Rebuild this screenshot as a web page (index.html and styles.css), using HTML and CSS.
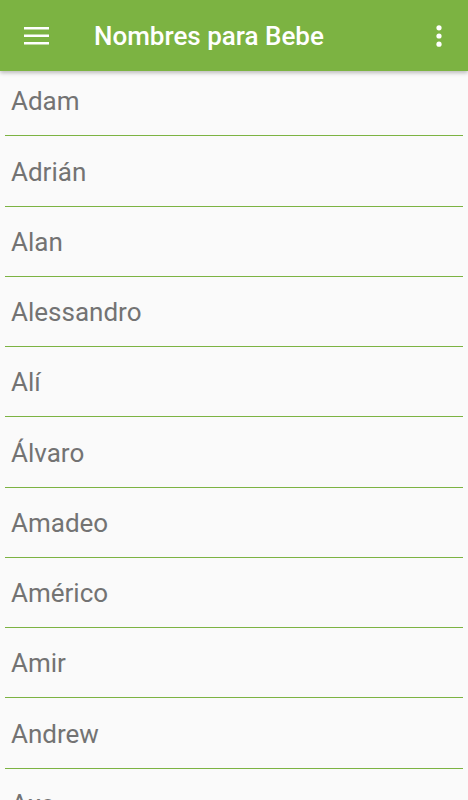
FILE: index.html
```html
<!DOCTYPE html>
<html lang="es">
<head>
<meta charset="utf-8">
<title>Nombres para Bebe</title>
<link rel="stylesheet" href="styles.css">
</head>
<body>
<header class="appbar">
  <button class="icon-btn menu" aria-label="Menú">
    <svg width="25" height="18" viewBox="0 0 25 18"><rect x="0" y="0" width="25" height="2.5" fill="#fff"/><rect x="0" y="7.5" width="25" height="2.5" fill="#fff"/><rect x="0" y="15" width="25" height="2.5" fill="#fff"/></svg>
  </button>
  <h1 class="title">Nombres para Bebe</h1>
  <button class="icon-btn more" aria-label="Más opciones">
    <svg width="6" height="22" viewBox="0 0 6 22"><circle cx="3" cy="2.8" r="2.6" fill="#fff"/><circle cx="3" cy="11" r="2.6" fill="#fff"/><circle cx="3" cy="19.2" r="2.6" fill="#fff"/></svg>
  </button>
</header>
<ul class="names">
  <li class="name">Adam</li>
  <li class="name">Adrián</li>
  <li class="name">Alan</li>
  <li class="name">Alessandro</li>
  <li class="name">Alí</li>
  <li class="name">Álvaro</li>
  <li class="name">Amadeo</li>
  <li class="name">Américo</li>
  <li class="name">Amir</li>
  <li class="name">Andrew</li>
  <li class="name">Axe</li>
</ul>
</body>
</html>
```
FILE: styles.css
```css
html, body {
  margin: 0;
  padding: 0;
  background: #fafafa;
  overflow: hidden;
  height: 800px;
}
body {
  font-family: Roboto, "Noto Sans", "Liberation Sans", sans-serif;
}
.appbar {
  position: relative;
  z-index: 2;
  height: 71px;
  background: #7cb342;
  display: flex;
  align-items: center;
  box-shadow: 0 2px 4px rgba(0,0,0,0.25);
}
.icon-btn {
  border: 0;
  background: none;
  padding: 0;
  display: flex;
  align-items: center;
  justify-content: center;
}
.menu {
  width: 25px;
  margin-left: 24px;
  margin-top: 1px;
}
.title {
  margin: 0 0 0 45px;
  flex: 1;
  color: #fff;
  font-size: 26px;
  font-weight: 500;
  letter-spacing: 0;
}
.more {
  width: 6px;
  margin-right: 26px;
  margin-top: 1px;
}
.names {
  list-style: none;
  margin: 0 5px;
  padding: 0;
}
.name {
  height: 68px;
  padding: 1px 0 0 6px;
  border-bottom: 1px solid #7cb342;
  display: flex;
  align-items: center;
  font-size: 26px;
  color: #737373;
}
.name:nth-child(4n+2) {
  height: 69px;
}
.name:first-child {
  height: 60px;
  padding-top: 0;
  padding-bottom: 4px;
}
```
